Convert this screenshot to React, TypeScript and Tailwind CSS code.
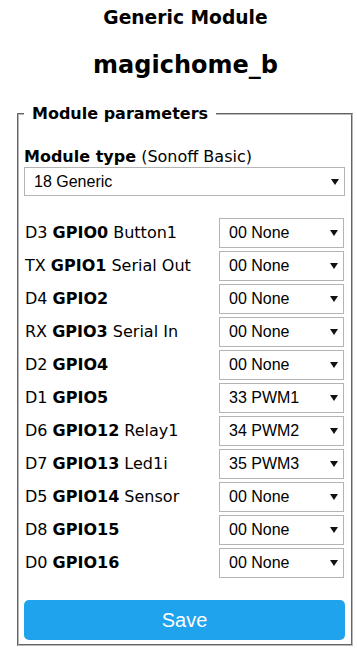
const pins = [
  { pin: 'D3', gpio: 'GPIO0', name: 'Button1', value: '00 None' },
  { pin: 'TX', gpio: 'GPIO1', name: 'Serial Out', value: '00 None' },
  { pin: 'D4', gpio: 'GPIO2', name: '', value: '00 None' },
  { pin: 'RX', gpio: 'GPIO3', name: 'Serial In', value: '00 None' },
  { pin: 'D2', gpio: 'GPIO4', name: '', value: '00 None' },
  { pin: 'D1', gpio: 'GPIO5', name: '', value: '33 PWM1' },
  { pin: 'D6', gpio: 'GPIO12', name: 'Relay1', value: '34 PWM2' },
  { pin: 'D7', gpio: 'GPIO13', name: 'Led1i', value: '35 PWM3' },
  { pin: 'D5', gpio: 'GPIO14', name: 'Sensor', value: '00 None' },
  { pin: 'D8', gpio: 'GPIO15', name: '', value: '00 None' },
  { pin: 'D0', gpio: 'GPIO16', name: '', value: '00 None' },
];

const Select = ({ value, className }: { value: string; className: string }) => (
  <div className={`relative ${className}`}>
    <select
      defaultValue={value}
      className="h-full w-full appearance-none border border-[#b4b4b4] bg-white pl-[9px] font-['Liberation_Sans',sans-serif] text-[16px] text-black outline-none"
    >
      <option>{value}</option>
    </select>
    {/* dropdown arrow */}
    <svg
      className="pointer-events-none absolute right-[6px] top-1/2 -translate-y-1/2"
      width="8"
      height="7"
      viewBox="0 0 8 7"
    >
      <path d="M0 0.5 H8 L4 6.5 Z" fill="#111" />
    </svg>
  </div>
);

export default function App() {
  return (
    <div className="w-[357px] bg-white font-['DejaVu_Sans',sans-serif] text-black">
      {/* page content is centred a little right of the viewport centre */}
      <div className="pl-[14px] text-center">
        <div className="pt-[7px] text-[18.7px] font-bold leading-[22px]">Generic Module</div>
        <div className="mt-[22px] text-[24px] font-bold leading-[28px]">magichome_b</div>
      </div>

      <fieldset className="mx-[17px] mt-[25px] w-[336px] border-2 border-[#b8b8b8] px-[5px] pb-[4px] [border-style:groove]">
        <legend className="px-[8px] text-[16px] font-bold leading-[20px]">Module parameters</legend>

        <div className="mt-[23px] text-[16px] leading-[20px]">
          <b>Module type</b> (Sonoff Basic)
        </div>
        <Select value="18 Generic" className="h-[29px] w-[321px]" />

        <div className="mt-[22px] flex flex-col gap-[3px]">
          {pins.map((p) => (
            <div key={p.gpio} className="flex h-[30px] items-center justify-between pr-[2px]">
              <span className="pl-[1px] text-[16px] leading-[20px]">
                {p.pin} <b>{p.gpio}</b>
                {p.name && ` ${p.name}`}
              </span>
              <Select value={p.value} className="h-[30px] w-[125px]" />
            </div>
          ))}
        </div>

        <button className="mt-[22px] h-[40px] w-[321px] rounded-[5px] bg-[#1fa3ec] font-['Liberation_Sans',sans-serif] text-[20px] text-white">
          Save
        </button>
      </fieldset>
    </div>
  );
}
